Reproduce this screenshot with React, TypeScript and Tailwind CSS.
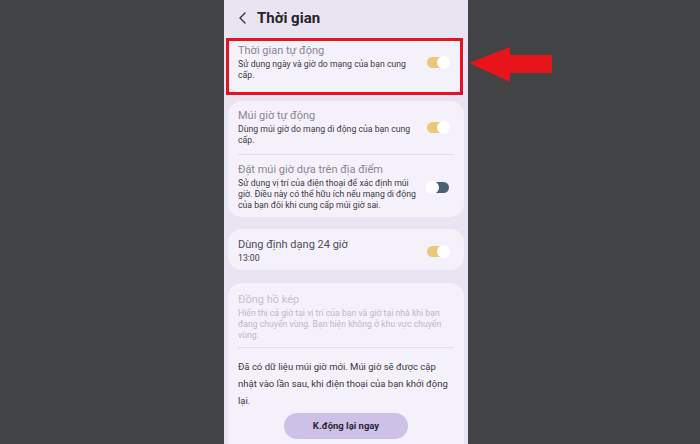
import React from "react";

function Toggle({ dark }: { dark?: boolean }) {
  if (dark) {
    return (
      <div className="relative w-[22px] h-[11px] rounded-full bg-[#4c6075] shrink-0">
        <div className="absolute left-[-1px] top-[-1px] w-[13px] h-[13px] rounded-full bg-white" />
      </div>
    );
  }
  return (
    <div className="relative w-[22px] h-[11px] rounded-full bg-[#e8c978] shrink-0">
      <div className="absolute right-[-1px] top-[-1px] w-[13px] h-[13px] rounded-full bg-white" />
    </div>
  );
}

function Row({
  title,
  desc,
  titleClass = "text-[#8a8591]",
  descClass = "text-[#3d3942]",
  toggle,
}: {
  title: string;
  desc: string;
  titleClass?: string;
  descClass?: string;
  toggle?: React.ReactNode;
}) {
  return (
    <div className="flex items-center justify-between">
      <div className={toggle ? "w-[178px]" : "flex-1"}>
        <p className={`text-[11px] leading-[14px] ${titleClass}`}>{title}</p>
        <p className={`mt-[1px] text-[8.7px] leading-[11px] ${descClass}`}>{desc}</p>
      </div>
      {toggle && <div className="pr-[5px]">{toggle}</div>}
    </div>
  );
}

export default function App() {
  return (
    <div
      className="relative w-[700px] h-[444px] bg-[#424344] overflow-hidden"
      style={{ fontFamily: "Roboto, 'Noto Sans', sans-serif" }}
    >
      <div className="ml-[224px] w-[244px] h-full bg-[#e9e4f2] px-[4px]">
        {/* header */}
        <div className="h-[36px] flex items-center pl-[10px] gap-[9px]">
          <svg width="10" height="12" viewBox="0 0 10 12" fill="none">
            <path d="M7 1 L2 6 L7 11" stroke="#333" strokeWidth="1.4" strokeLinecap="round" strokeLinejoin="round" />
          </svg>
          <span className="text-[15px] font-bold text-[#26232a]">Thời gian</span>
        </div>

        {/* auto time */}
        <div className="relative mt-[4px] rounded-[14px] bg-[#f4f1fa] px-[10px] pt-[4px] pb-[12px]">
          <Row
            title="Thời gian tự động"
            desc="Sử dụng ngày và giờ do mạng của bạn cung cấp."
            toggle={<Toggle />}
          />
          <div className="absolute left-[-2px] right-[1px] top-[-2px] bottom-[-2px] border-[3px] border-[#e3141f]" />
        </div>

        {/* time zone */}
        <div className="mt-[8px] rounded-[14px] bg-[#f4f1fa] px-[10px] pt-[8px] pb-[6px]">
          <Row
            title="Múi giờ tự động"
            desc="Dùng múi giờ do mạng di động của bạn cung cấp."
            toggle={<Toggle />}
          />
          <div className="my-[8px] h-px bg-[#e2dde8]" />
          <Row
            title="Đặt múi giờ dựa trên địa điểm"
            desc="Sử dụng vị trí của điện thoại để xác định múi giờ. Điều này có thể hữu ích nếu mạng di động của bạn đôi khi cung cấp múi giờ sai."
            toggle={<Toggle dark />}
          />
        </div>

        {/* 24h */}
        <div className="mt-[12px] rounded-[14px] bg-[#f4f1fa] px-[10px] pt-[9px] pb-[6px]">
          <Row
            title="Dùng định dạng 24 giờ"
            desc="13:00"
            titleClass="text-[#4f4b55]"
            toggle={<Toggle />}
          />
        </div>

        {/* dual clock */}
        <div className="mt-[13px] rounded-t-[14px] bg-[#f4f1fa] px-[10px] pt-[10px] pb-[20px]">
          <Row
            title="Đồng hồ kép"
            desc="Hiển thị cả giờ tại vị trí của bạn và giờ tại nhà khi bạn đang chuyển vùng. Bạn hiện không ở khu vực chuyển vùng."
            titleClass="text-[#c6c1cc]"
            descClass="text-[#bdb8c3]"
          />
          <div className="mt-[6px] mb-[10px] h-px bg-[#e2dde8]" />
          <p className="text-[9.5px] leading-[17px] text-[#3a3640]">
            Đã có dữ liệu múi giờ mới. Múi giờ sẽ được cập nhật vào lần sau, khi điện thoại của bạn khởi động lại.
          </p>
          <div className="mt-[4px] flex justify-center">
            <div className="w-[124px] h-[26px] rounded-full bg-[#cdc1e8] flex items-center justify-center text-[9.5px] font-bold text-[#2a2630]">
              K.động lại ngay
            </div>
          </div>
        </div>
      </div>

      {/* annotation arrow */}
      <svg className="absolute left-[468px] top-[44px]" width="88" height="40" viewBox="0 0 88 40">
        <polygon points="1,19 42,3 42,11 84,11 84,29 42,29 42,38" fill="#e8141c" />
      </svg>
    </div>
  );
}
